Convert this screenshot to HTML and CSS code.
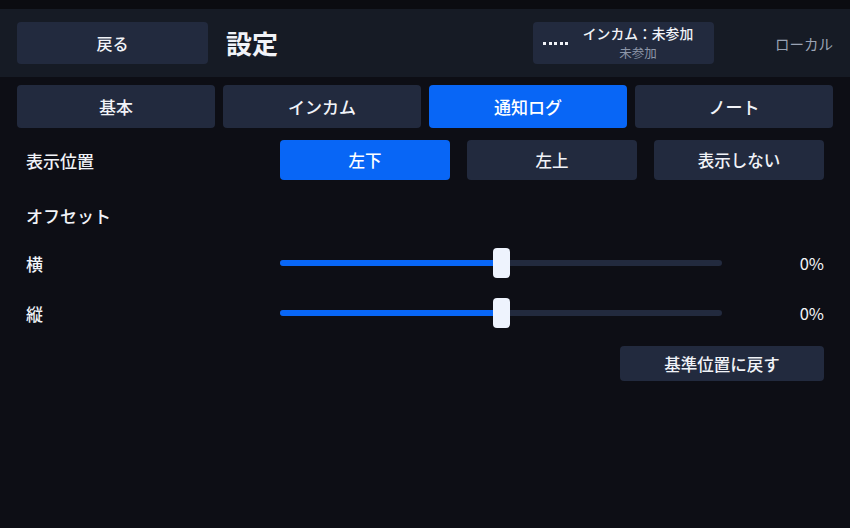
FILE: index.html
```html
<!DOCTYPE html>
<html lang="ja">
<head>
    <meta charset="UTF-8">
    <meta name="viewport" content="width=device-width, initial-scale=1.0">
    <title>設定</title>
    <link rel="stylesheet" href="styles.css">
</head>
<body>

<div class="top-strip"></div>

<!-- ヘッダー -->
<header class="header">
    <button class="btn back-btn">戻る</button>
    <h1 class="title">設定</h1>
    <div class="intercom">
        <div class="dots"><i></i><i></i><i></i><i></i><i></i></div>
        <div class="intercom-text">
            <div class="intercom-main">インカム：未参加</div>
            <div class="intercom-sub">未参加</div>
        </div>
    </div>
    <div class="mode">ローカル</div>
</header>

<!-- タブ -->
<nav class="tabs">
    <button class="btn tab">基本</button>
    <button class="btn tab">インカム</button>
    <button class="btn tab active">通知ログ</button>
    <button class="btn tab">ノート</button>
</nav>

<main class="settings">
    <div class="row position-row">
        <div class="label">表示位置</div>
        <div class="choices">
            <button class="btn choice active">左下</button>
            <button class="btn choice">左上</button>
            <button class="btn choice">表示しない</button>
        </div>
    </div>

    <div class="section-title">オフセット</div>

    <div class="row slider-row">
        <div class="label">横</div>
        <div class="slider">
            <div class="track"><div class="fill" style="width: 50%"></div></div>
            <div class="thumb" style="left: 50%"></div>
        </div>
        <div class="value">0%</div>
    </div>

    <div class="row slider-row">
        <div class="label">縦</div>
        <div class="slider">
            <div class="track"><div class="fill" style="width: 50%"></div></div>
            <div class="thumb" style="left: 50%"></div>
        </div>
        <div class="value">0%</div>
    </div>

    <div class="reset-row">
        <button class="btn reset-btn">基準位置に戻す</button>
    </div>
</main>

</body>
</html>
```

FILE: styles.css
```css
/* 基本 */
body {
    margin: 0;
    background-color: #0d0e15;
    color: #f1f3f8;
    font-family: "Noto Sans CJK JP", "Noto Sans", sans-serif;
    font-weight: 500;
}

.top-strip {
    height: 9px;
    background-color: #0b0c11;
}

.btn {
    border: none;
    border-radius: 4px;
    background-color: #222a3e;
    color: #f1f3f8;
    font-family: inherit;
    font-weight: 500;
    cursor: pointer;
    padding: 0;
}
.btn.active {
    background-color: #0866f6;
    color: #fff;
}

/* ヘッダー */
.header {
    display: flex;
    align-items: center;
    height: 68px;
    padding: 0 17px;
    background-color: #161b25;
}
.back-btn {
    width: 191px;
    height: 42px;
    font-size: 16px;
}
.title {
    margin: 0 0 0 18px;
    font-size: 26px;
    font-weight: bold;
    line-height: 1;
}
.intercom {
    display: flex;
    align-items: center;
    gap: 6px;
    width: 181px;
    height: 42px;
    margin-left: auto;
    padding: 0 12px 0 10px;
    box-sizing: border-box;
    border-radius: 4px;
    background-color: #222a3e;
}
.dots {
    display: flex;
    gap: 2.5px;
    padding-top: 1px;
}
.dots i {
    width: 3px;
    height: 3px;
    background-color: #f1f3f8;
}
.intercom-text {
    flex: 1;
    text-align: center;
}
.intercom-main {
    font-size: 13.8px;
    line-height: 19px;
}
.intercom-sub {
    font-size: 12.5px;
    font-weight: 400;
    line-height: 19px;
    color: #8d96a8;
}
.mode {
    margin-left: 61px;
    font-size: 14.5px;
    font-weight: 400;
    color: #9aa3b4;
}

/* タブ */
.tabs {
    display: grid;
    grid-template-columns: repeat(4, 1fr);
    gap: 8px;
    padding: 0 17px;
    margin-top: 8px;
}
.tab {
    height: 43px;
    font-size: 17px;
}

/* 設定項目 */
.settings {
    padding: 0 26px;
}
.row {
    display: grid;
    grid-template-columns: 254px 1fr;
    align-items: center;
}
.position-row {
    margin-top: 12px;
}
.label {
    font-size: 17px;
}
.choices {
    display: grid;
    grid-template-columns: repeat(3, 1fr);
    gap: 17px;
}
.choice {
    height: 40px;
    font-size: 16.5px;
}
.section-title {
    margin-top: 24px;
    font-size: 17px;
    line-height: 24px;
}

.slider-row {
    grid-template-columns: 254px 442px 1fr;
    height: 30px;
    margin-top: 20px;
}
.slider {
    position: relative;
    height: 30px;
    display: flex;
    align-items: center;
}
.track {
    width: 100%;
    height: 6px;
    border-radius: 3px;
    background-color: #222a3e;
    overflow: hidden;
}
.fill {
    height: 100%;
    background-color: #0866f6;
}
.thumb {
    position: absolute;
    top: 0;
    width: 17px;
    height: 30px;
    margin-left: -8px;
    border-radius: 4px;
    background-color: #eef3fd;
}
.value {
    text-align: right;
    font-size: 16.5px;
    font-weight: 400;
}

.reset-row {
    display: flex;
    justify-content: flex-end;
    margin-top: 18px;
}
.reset-btn {
    width: 204px;
    height: 35px;
    font-size: 16.5px;
}
```
